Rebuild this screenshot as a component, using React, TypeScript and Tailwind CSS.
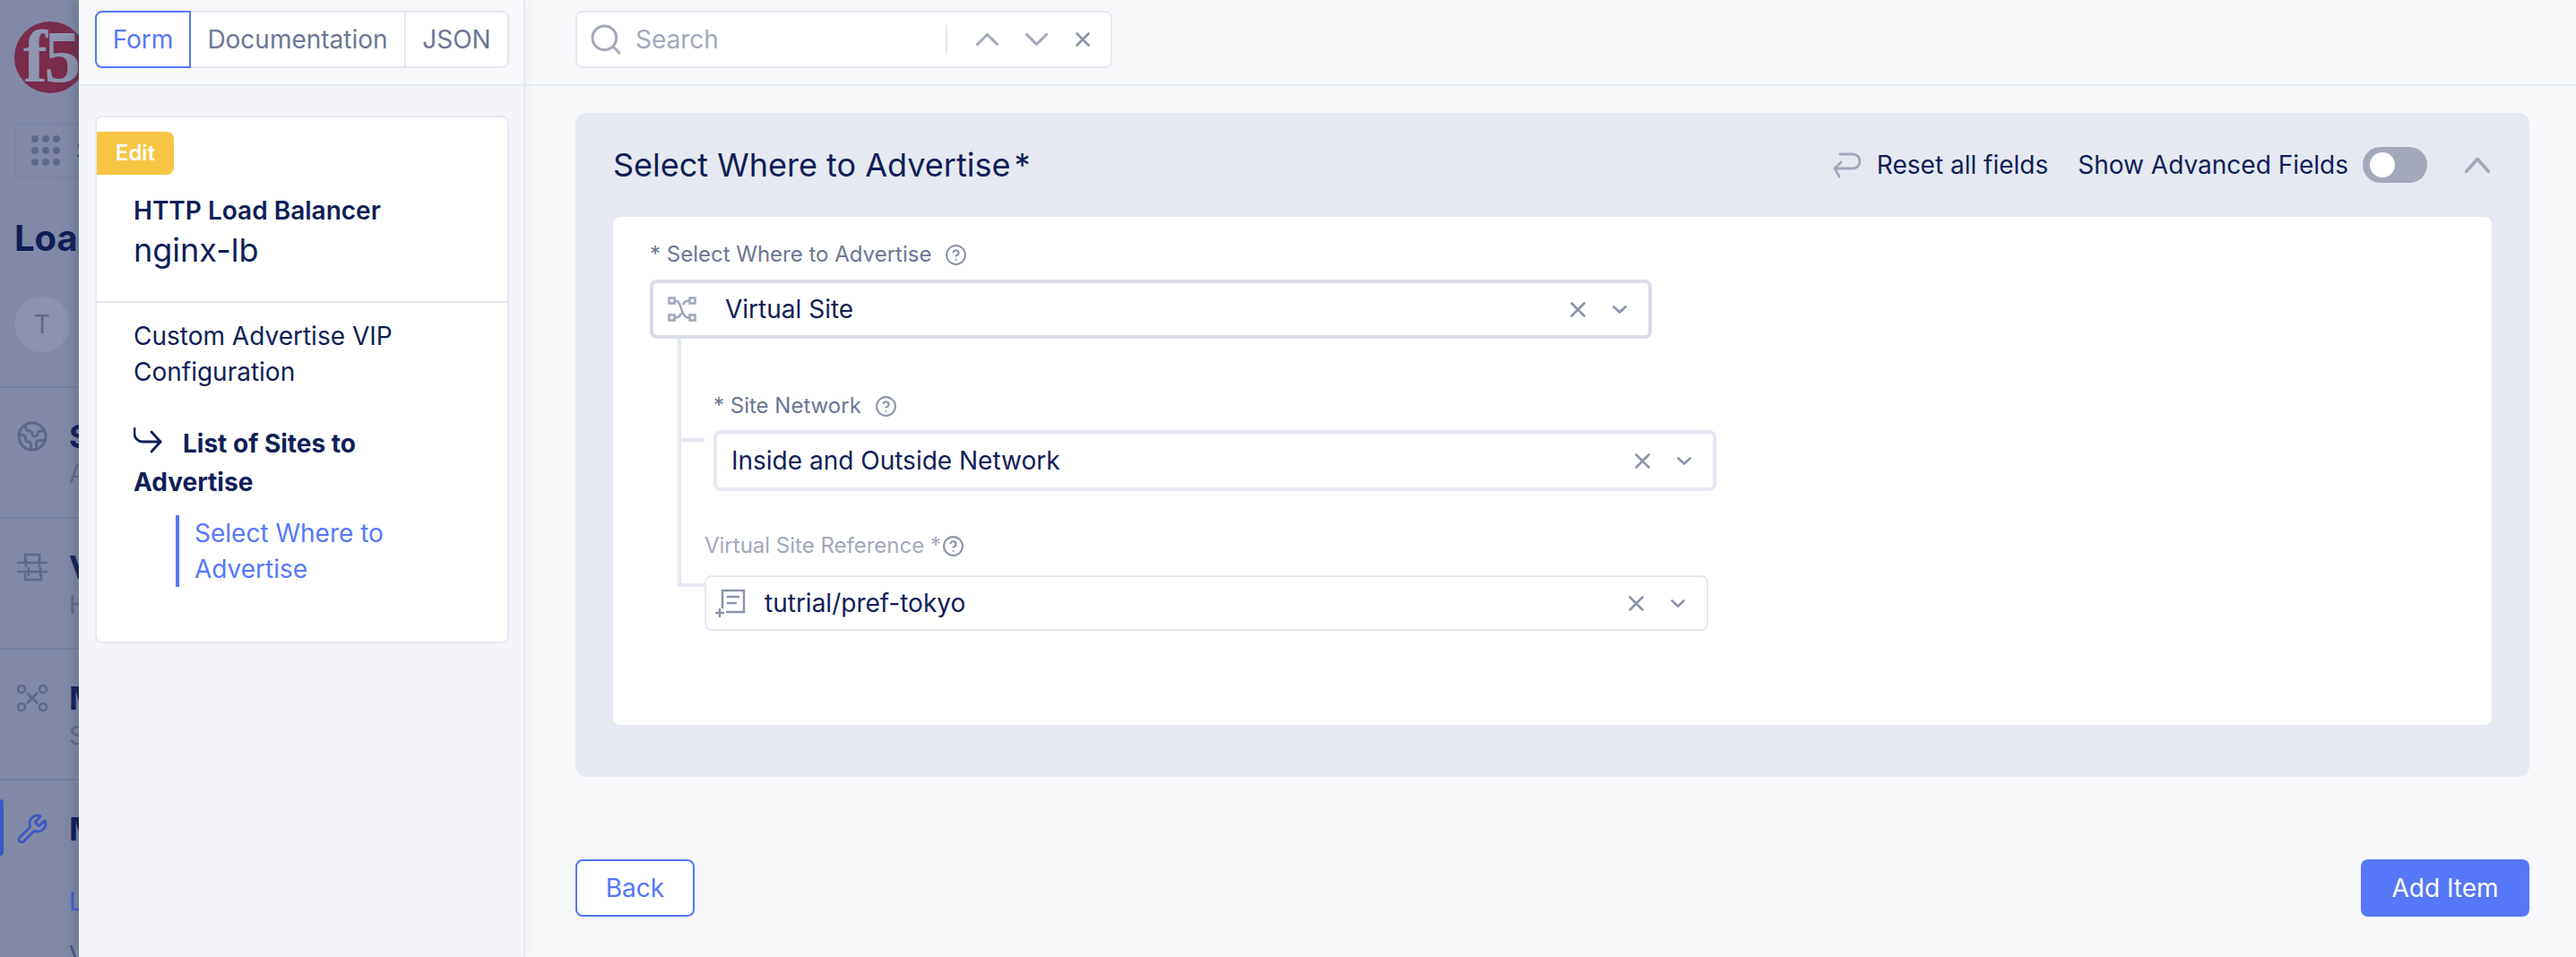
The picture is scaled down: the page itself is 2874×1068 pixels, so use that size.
import React from 'react';
import { CircleHelp, Earth, Search, Wrench } from 'lucide-react';

// thin chevrons and crosses, sized to the strokes in the picture
function Chev({ w, h, up, weight = 2.6, className }: { w: number; h: number; up?: boolean; weight?: number; className?: string }) {
  return (
    <svg width={w} height={h} viewBox={`0 0 ${w} ${h}`} fill="none" stroke="currentColor" strokeWidth={weight} strokeLinecap="round" strokeLinejoin="round" className={className}>
      <path d={up ? `M1.500 ${h - 1.500}L${w / 2} 1.500L${w - 1.500} ${h - 1.500}` : `M1.500 1.500L${w / 2} ${h - 1.500}L${w - 1.500} 1.500`} />
    </svg>
  );
}

function Cross({ size, className }: { size: number; className?: string }) {
  return (
    <svg width={size} height={size} viewBox={`0 0 ${size} ${size}`} fill="none" stroke="currentColor" strokeWidth="2.600" strokeLinecap="round" className={className}>
      <path d={`M1.500 1.500L${size - 1.500} ${size - 1.500}M${size - 1.500} 1.500L1.500 ${size - 1.500}`} />
    </svg>
  );
}

// icon set for the dimmed nav behind the drawer
function SlidersIcon() {
  return (
    <svg width="34" height="34" viewBox="0 0 34 34" fill="none" stroke="currentColor" strokeWidth="2.600" strokeLinecap="round">
      <path d="M1 12h32M1 22h32M10 8v8M25 8v8M13 18v8M26 18v8" />
      <path d="M9 3h16v8M9 3v7M9 31h18v-5M9 31v-6" />
    </svg>
  );
}

function MeshIcon() {
  return (
    <svg width="34" height="30" viewBox="0 0 34 30" fill="none" stroke="currentColor" strokeWidth="2.600">
      <circle cx="5" cy="5" r="4" />
      <circle cx="29" cy="5" r="4" />
      <circle cx="5" cy="25" r="4" />
      <circle cx="29" cy="25" r="4" />
      <path d="M11 9l12 12M23 9L11 21" />
    </svg>
  );
}

function VirtualSiteIcon() {
  return (
    <svg width="32" height="28" viewBox="0 0 32 28" fill="none" stroke="#a3a9bb" strokeWidth="2.600">
      <rect x="1.500" y="1.500" width="6" height="6" />
      <rect x="24.500" y="1.500" width="6" height="6" />
      <rect x="1.500" y="20.500" width="6" height="6" />
      <rect x="24.500" y="20.500" width="6" height="6" />
      <path d="M8 4.500c9 0 5 19 16 19M8 23.500c4 0 6-2 7-5M17 9c1-2.500 3-4.500 7-4.500" />
    </svg>
  );
}

function RefIcon() {
  return (
    <svg width="34" height="32" viewBox="0 0 34 32" fill="none" stroke="#8b93aa" strokeWidth="2.400">
      <path d="M8 22V2h24v24H12" />
      <path d="M13 9h14M13 16h11" />
      <path d="M5 23v8M1 27h8" strokeLinecap="round" />
    </svg>
  );
}

function ResetIcon() {
  return (
    <svg width="31" height="29" viewBox="0 0 31 29" fill="none" stroke="#a3a9bb" strokeWidth="2.800" strokeLinecap="round" strokeLinejoin="round">
      <path d="M8 2h14a7.500 7.500 0 0 1 0 16H3" />
      <path d="M9 11l-7 7 5 9" />
    </svg>
  );
}

function NextArrow() {
  return (
    <svg width="32" height="30" viewBox="0 0 32 30" fill="none" stroke="#0f1e57" strokeWidth="2.800" strokeLinecap="round" strokeLinejoin="round">
      <path d="M1 1v6a9 9 0 0 0 9 9h20" />
      <path d="M20 5l10 11-10 11" />
    </svg>
  );
}

function GridDots() {
  return (
    <div className="grid grid-cols-3 gap-x-[4px] gap-y-[5px] w-[32px]">
      {Array.from({ length: 9 }).map((_, i) => (
        <span key={i} className="w-[8px] h-[8px] rounded-full bg-[#5f6888]" />
      ))}
    </div>
  );
}

function NavRow({ icon, title, sub }: { icon: React.ReactNode; title: string; sub: string }) {
  return (
    <div className="h-[146px] flex pl-[18px] pt-[36px] border-b-2 border-[#747d9c] gap-[23px] text-[#5f6888]">
      <div className="w-[36px] h-[36px] flex items-center justify-center shrink-0">{icon}</div>
      <div>
        <div className="text-[36px] leading-[36px] font-bold text-[#0f1e57]">{title}</div>
        <div className="text-[28px] leading-[36px] mt-[6px] text-[#5f6888]">{sub}</div>
      </div>
    </div>
  );
}

function DimmedNav() {
  return (
    <div className="w-[88px] h-[1068px] shrink-0 overflow-hidden bg-[#8189a7]">
      <div className="w-[300px]">
        <div className="h-[24px]" />
        <div className="w-[80px] h-[80px] ml-[16px] rounded-full bg-[#792c4b] text-[#8e95ae] flex items-center justify-center font-['Liberation_Serif',serif] font-bold text-[82px] leading-none tracking-[-4px]">
          f5
        </div>
        <div className="w-[120px] h-[62px] ml-[16px] mt-[33px] rounded-lg border-2 border-[#7a83a1] flex items-center pl-[17px] gap-[18px]">
          <GridDots />
          <span className="text-[28px] text-[#0f1e57]">S</span>
        </div>
        <div className="ml-[16px] mt-[42px] text-[40px] leading-[50px] font-bold text-[#0f1e57]">Load</div>
        <div className="h-[142px] border-b-2 border-[#747d9c] pt-[40px] pl-[16px]">
          <div className="w-[62px] h-[62px] rounded-full bg-[#8a92ae] flex items-center justify-center text-[28px] text-[#5f6888]">T</div>
        </div>
        <NavRow icon={<Earth size={38} strokeWidth={2} />} title="S" sub="A" />
        <NavRow icon={<SlidersIcon />} title="V" sub="H" />
        <NavRow icon={<MeshIcon />} title="M" sub="S" />
        <div className="relative pl-[18px] pt-[36px] flex gap-[23px]">
          <div className="absolute left-0 top-[21px] w-[4px] h-[63px] rounded-r bg-[#3c58c6]" />
          <div className="w-[36px] h-[36px] flex items-center justify-center shrink-0 text-[#3c58c6]">
            <Wrench size={36} strokeWidth={1.8} />
          </div>
          <div>
            <div className="text-[36px] leading-[36px] font-bold text-[#0f1e57]">M</div>
            <div className="text-[28px] leading-[36px] mt-[45px] text-[#3c58c6]">L</div>
            <div className="text-[28px] leading-[36px] mt-[24px] text-[#4a5478]">V</div>
          </div>
        </div>
      </div>
    </div>
  );
}

function Tabs() {
  return (
    <div className="flex w-[462px] h-[64px] rounded-lg bg-white border-2 border-[#e6e8f2] text-[28px] text-[#6c7694]">
      <div className="w-[107px] -m-[2px] mr-0 h-[64px] border-2 border-[#5578f8] rounded-l-lg text-[#5578f8] flex items-center justify-center">Form</div>
      <div className="w-[240px] flex items-center justify-center border-r-2 border-[#e6e8f2]">Documentation</div>
      <div className="flex-1 flex items-center justify-center">JSON</div>
    </div>
  );
}

function SideCard() {
  return (
    <div className="mt-[33px] w-[462px] h-[589px] bg-white rounded-lg border-2 border-[#e6e8f2] text-[#0f1e57]">
      <div className="mt-[16px] w-[86px] h-[48px] rounded-r-lg bg-[#f8c545] text-white text-[24px] font-semibold flex items-center justify-center">Edit</div>
      <div className="h-[143px] border-b-2 border-[#e6e8f2] pl-[41px]">
        <div className="pt-[22px] text-[28px] leading-[36px] font-semibold">HTTP Load Balancer</div>
        <div className="mt-[4px] text-[36px] leading-[44px]">nginx-lb</div>
      </div>
      <div className="pl-[41px] pr-[20px]">
        <div className="pt-[17px] text-[28px] leading-[40px]">Custom Advertise VIP<br />Configuration</div>
        <div className="mt-[39px] text-[28px] leading-[43px] font-bold">
          <span className="inline-block w-[55px] align-[-2px]"><NextArrow /></span>List of Sites to<br />Advertise
        </div>
        <div className="ml-[47px] mt-[15px] border-l-4 border-[#5578f8] pl-[17px] text-[28px] leading-[40px] text-[#5578f8]">
          Select Where to<br />Advertise
        </div>
      </div>
    </div>
  );
}

function SearchBox() {
  return (
    <div className="w-[599px] h-[64px] rounded-lg bg-white border-2 border-[#e6e8f2] flex items-center pl-[12px] text-[#a3a9bb]">
      <Search size={40} strokeWidth={1.8} className="shrink-0" />
      <span className="ml-[13px] w-[346px] text-[28px]">Search</span>
      <div className="w-[2px] h-[32px] bg-[#e6e8f2]" />
      <Chev w={25} h={14} up weight={3} className="ml-[32px]" />
      <Chev w={25} h={14} weight={3} className="ml-[30px]" />
      <Cross size={16} className="ml-[31px] text-[#8b93aa]" />
    </div>
  );
}

function FieldLabel({ text, light, gap }: { text: string; light?: boolean; gap: string }) {
  return (
    <div className={`h-[32px] flex items-center text-[24px] ${light ? 'text-[#a3a9bb]' : 'text-[#6c7694]'}`}>
      <span>{text}</span>
      <CircleHelp size={25} strokeWidth={2} className={`${gap} text-[#8b93aa]`} />
    </div>
  );
}

function SelectBox({ className, icon, value, textGap }: { className: string; icon?: React.ReactNode; value: string; textGap: string }) {
  return (
    <div className={`flex items-center bg-white rounded-lg ${className}`}>
      {icon}
      <span className={`${textGap} text-[28px] text-[#0f1e57] flex-1`}>{value}</span>
      <Cross size={17} className="text-[#8b93aa]" />
      <Chev w={16} h={9} className="ml-[30px] mr-[24px] text-[#8b93aa]" />
    </div>
  );
}

function TreeFields() {
  return (
    <div className="flex items-start ml-[31px]">
      <div className="w-[4px] h-[277px] bg-[#e6e8f2]" />
      <div>
        <div className="flex items-start">
          <div className="w-[26px] h-[4px] mt-[111px] bg-[#e6e8f2]" />
          <div className="ml-[10px] pt-[59px]">
            <FieldLabel text="* Site Network" gap="ml-[15px]" />
            <SelectBox
              className="mt-[11px] w-[1119px] h-[68px] border-4 border-[#e6e8f2]"
              value="Inside and Outside Network"
              textGap="ml-[16px]"
            />
          </div>
        </div>
        <div className="flex items-start">
          <div className="w-[26px] h-[4px] mt-[103px] bg-[#e6e8f2]" />
          <div className="pt-[45px]">
            <FieldLabel text="Virtual Site Reference *" light gap="ml-[1px]" />
            <SelectBox
              className="mt-[17px] w-[1120px] h-[62px] border-2 border-[#e6e8f2] pl-[10px]"
              icon={<RefIcon />}
              value="tutrial/pref-tokyo"
              textGap="ml-[21px]"
            />
          </div>
        </div>
      </div>
    </div>
  );
}

function AdvertisePanel() {
  return (
    <div className="mt-[30px] w-[2180px] h-[741px] rounded-xl bg-[#e6e9f2] px-[42px] text-[#0f1e57]">
      <div className="h-[116px] flex items-center">
        <span className="text-[36px] flex-1">Select Where to Advertise<span className="ml-[4px]">*</span></span>
        <ResetIcon />
        <span className="ml-[18px] text-[28px]">Reset all fields</span>
        <span className="ml-[33px] text-[28px]">Show Advanced Fields</span>
        <div className="ml-[16px] w-[72px] h-[40px] rounded-full bg-[#a3a9bb] flex items-center pl-[8px]">
          <div className="w-[28px] h-[28px] rounded-full bg-white" />
        </div>
        <Chev w={28} h={17} up weight={3.6} className="ml-[42px] mr-[2px] text-[#a3a9bb]" />
      </div>
      <div className="h-[567px] rounded-lg bg-white pt-[26px] pl-[41px]">
        <FieldLabel text="* Select Where to Advertise" gap="ml-[15px]" />
        <SelectBox
          className="mt-[12px] w-[1118px] h-[66px] border-4 border-[#d9dce9] pl-[16px]"
          icon={<VirtualSiteIcon />}
          value="Virtual Site"
          textGap="ml-[32px]"
        />
        <TreeFields />
      </div>
    </div>
  );
}

export default function App() {
  return (
    <div className="flex w-[2874px] h-[1068px] overflow-hidden font-['Inter',sans-serif] bg-[#f7f8fa]">
      <DimmedNav />
      <div className="w-[498px] h-[1068px] shrink-0 bg-[#f3f5fa] border-r-2 border-[#e6e8f2] shadow-[-6px_0_12px_rgba(60,70,110,0.25)]">
        <div className="h-[96px] pt-[12px] pl-[18px] bg-[#f7f8fa] border-b-2 border-[#e6e8f2]">
          <Tabs />
        </div>
        <div className="pl-[18px]">
          <SideCard />
        </div>
      </div>
      <div className="flex-1">
        <div className="h-[96px] pt-[12px] pl-[56px] border-b-2 border-[#e6e8f2]">
          <SearchBox />
        </div>
        <div className="pl-[56px]">
          <AdvertisePanel />
          <div className="mt-[92px] w-[2180px] flex justify-between text-[28px]">
            <button className="w-[133px] h-[64px] rounded-lg bg-white border-2 border-[#5578f8] text-[#5578f8]">Back</button>
            <button className="w-[188px] h-[64px] rounded-lg bg-[#5578f8] text-white">Add Item</button>
          </div>
        </div>
      </div>
    </div>
  );
}
